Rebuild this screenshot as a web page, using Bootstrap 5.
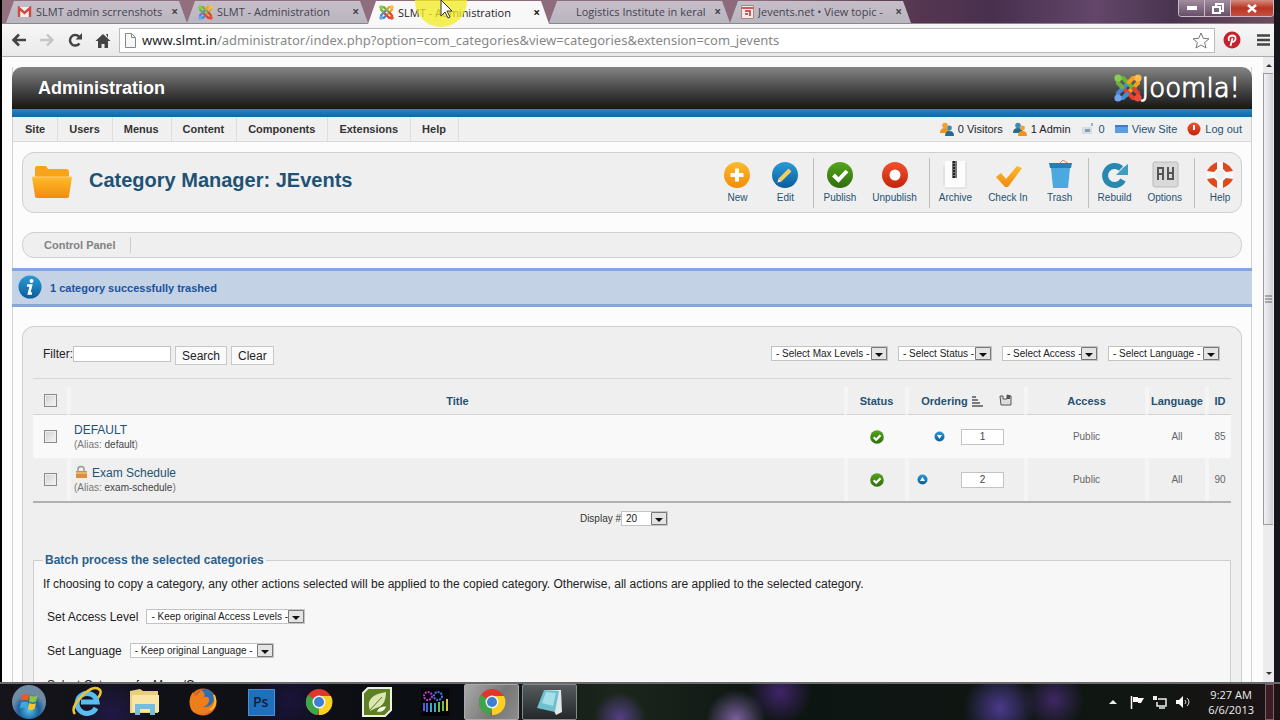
<!DOCTYPE html>
<html lang="en">
<head>
<meta charset="utf-8">
<meta name="viewport" content="width=device-width, initial-scale=1">
<title>SLMT - Administration</title>
<link href="https://cdn.jsdelivr.net/npm/bootstrap@5.3.0/dist/css/bootstrap.min.css" rel="stylesheet">
<style>
:root { --sys: "Open Sans", "Noto Sans", sans-serif; --ink: #1f5273; }
body { font: 11px/16px "Liberation Sans", Arial, sans-serif; color: #333; background: #000; }
a { color: var(--ink); text-decoration: none; }
svg { display: block; flex: none; }
.screen { height: 100vh; overflow: hidden; }
.window-body { margin-left: 2px; min-height: 0; border-right: 6px solid #17161c; }

/* browser chrome */
.tabstrip { height: 24px; font: 11px/20px var(--sys); color: #46424f; background: linear-gradient(90deg, #94707f 0, #8c6a7c 60%, #553650 72%, #49304f 78%, #63466a 86%, #493450 92%, #704b5b 100%); border-bottom: 1px solid #8b8692; }
.b-tab { flex: 0 0 181px; min-width: 0; height: 22px; margin-top: 1px; padding: 0 9px 0 11px; background: linear-gradient(#c5bec8, #b9b6c0); clip-path: polygon(8px 0, calc(100% - 8px) 0, 100% 100%, 0 100%); }
.b-tab.current { background: #f8f8f9; color: #222; height: 23px; }
.b-tab .close-x { font: bold 12px/18px var(--sys); }
.b-new { width: 28px; height: 12px; margin: 5px 0 0 4px; background: #bcb6c6; clip-path: polygon(0 0, 82% 0, 100% 100%, 16% 100%); }
.plain { border: 0; padding: 0; background: none; color: inherit; }
.pointer { left: 411px; top: 0; z-index: 3; pointer-events: none; }
.win-ctl { height: 17px; border: 1px solid #c9b9c9; border-top: 0; border-radius: 0 0 4px 4px; overflow: hidden; }
.win-ctl button { width: 26px; background: linear-gradient(#a28c9f, #665068); border-right: 1px solid #c9b9c9; display: grid; place-items: center; }
.win-ctl button:last-child { width: 42px; border: 0; background: linear-gradient(#d58c80, #b93423 50%, #c65040); }
.toolbar { height: 33px; background: linear-gradient(#f7f7f7, #e9e9e9); border-bottom: 1px solid #ababab; padding: 0 3px 0 9px; }
.omni { height: 25px; border: 1px solid #bbb; background: #fff; font: 13px/22px "Noto Sans", "Open Sans", sans-serif; }
.omni input { border: 0; outline: 0; width: 100%; color: #878787; }

/* page */
.page { background: #fcfcfc; padding: 10px 11px 0 10px; overflow: hidden; }
.frame { border: solid #d3d3d6; border-width: 0 1px; flex: 1; }
.head { height: 42px; padding: 0 12px 0 26px; border-radius: 10px 10px 0 0; background: linear-gradient(#858585, #4a4a4a 50%, #151515); margin: 0 -1px; }
.head h1 { font-size: 18px; line-height: 42px; font-weight: 700; color: #fff; margin: 0; }
.brand { font: 200 26px/40px "DejaVu Sans", sans-serif; color: #fff; -webkit-text-stroke: 1px #fff; }
.stripe { height: 8px; background: linear-gradient(#2489c2, #11679c); margin: 0 -1px; }
.menubar { height: 25px; background: #f0f0f1; border-bottom: 1px solid #d9d9da; }
.menubar .nav { padding-left: 1px; }
.menubar .nav-link { font-weight: 700; color: #333; padding: 4px 12px 4px 11px; border-right: 1px solid #ddd; line-height: 16px; height: 24px; }
.stats { gap: 4px; padding-right: 9px; }
.stats .gap-after { margin-right: 6px; }
.panel { background: #efefef; border: 1px solid #cfcfcf; border-radius: 12px; margin: 0 9px; }
.titlebox { margin-top: 10px; height: 61px; }
.titlebox h2 { font-size: 20px; line-height: 26px; font-weight: 700; color: var(--ink); margin: 0; padding-bottom: 5px; }
.tool { font-size: 10px; line-height: 14px; padding: 0 8px; color: var(--ink); text-align: center; }
.tool svg { margin: 0 auto 1px; }
.tool.final { padding-right: 5px; }
.rule { width: 1px; height: 50px; background: #bdbdbd; margin: 0 1px 0 4px; }
.submenu { margin-top: 19px; height: 26px; }
.submenu a { font-weight: 700; color: #828282; padding: 0 14px 0 21px; border-right: 1px solid #ccc; }
.notice { margin: 10px -1px 0; height: 39px; background: #c3d2e5; border: solid #84a7db; border-width: 3px 0; color: #1a52a0; font-weight: 700; padding-left: 6px; }
.main-box { margin-top: 19px; padding: 0 10px; border-radius: 12px 12px 0 0; border-bottom: 0; }
.filter { height: 52px; padding: 19px 11px 0 10px; border-bottom: 1px solid #d6d6d6; font-size: 12px; color: #222; }
.filter .picks { gap: 10px; }
.field { border: 1px solid #c3c3c3; background: #fff; border-radius: 0; outline: 0; height: 16px; padding: 0 4px; }
.filter .field { width: 98px; }
.push { font-size: 12px; line-height: 16px; border: 1px solid #c8c8c8; background: #fafafa; padding: 0 6px; height: 19px; border-radius: 0; color: #222; }
.pick { appearance: none; font-size: 10px; line-height: 13px; height: 15px; padding: 0 16px 0 4px; color: #222; border: 1px solid #c3c3c3; border-radius: 0; background: #fff url("data:image/svg+xml,%3Csvg xmlns='http://www.w3.org/2000/svg' width='16' height='13'%3E%3Cpath d='M.5.5h15v12H.5z' fill='%23e4e4e4' stroke='%23777'/%3E%3Cpath d='M4 6h8l-4 4z' fill='%23111'/%3E%3C/svg%3E") right center no-repeat; }
.w-levels { width: 117px; } .w-status { width: 94px; } .w-access { width: 96px; } .w-lang { width: 112px; }
.w-keep-a { width: 159px; } .w-keep-l { width: 144px; } .w-count { width: 47px; }
.tick { appearance: none; width: 13px; height: 13px; border: 1px solid #8a8a8a; background: linear-gradient(135deg, #cfcfcf, #f8f8f8); box-shadow: inset 0 0 0 1px #eee; display: block; margin: 0 auto; border-radius: 0; }
.listing-wrap { padding-top: 8px; border-bottom: 2px solid #b1b1b1; }
.listing { width: 100%; table-layout: fixed; border-collapse: separate; border-spacing: 0; }
.listing th { height: 28px; color: var(--ink); text-align: center; border-bottom: 1px solid #d3d3d3; padding: 0; }
.listing th + th, .listing td + td { border-left: 4px solid #f5f5f5; }
.listing td { height: 43px; text-align: center; color: #666; padding: 0; font-size: 10px; line-height: 14px; }
.listing tbody tr:first-child td { background: #f9f9f9; border-left-color: #f9f9f9; }
.listing td.name { text-align: left; padding-left: 3px; color: #777; }
.listing td.name a { font-size: 12px; line-height: 16px; }
.listing td.name span { color: #444; }
.listing .field { width: 43px; text-align: center; color: #444; }
.c-tick { width: 34px; } .c-status { width: 61px; } .c-order { width: 119px; } .c-access { width: 121px; } .c-lang { width: 60px; } .c-id { width: 26px; }
.paging { font-size: 10px; padding: 8px 16px 0 0; }
.batch { margin-top: 26px; border: 1px solid #cfcfcf; background: #f7f7f7; padding: 0 9px 20px; font-size: 12px; color: #222; height: 300px; }
.batch legend { float: none; width: auto; font-size: 12px; line-height: 14px; font-weight: 700; color: #2b5f8c; margin: 0; padding: 0 2px; }
.batch p { margin: 9px 0 17px; }
.batch .line { height: 16px; margin: 0 0 18px 4px; }
.scroller { width: 11px; background: #ececee; }
.scroller .thumb { border: 1px solid #9a9a9f; border-right: 0; background: linear-gradient(90deg, #f2f2f4, #cfcfd8); height: 452px; width: 10px; }

/* desktop bar */
.taskbar { height: 38px; border-top: 2px solid #6a6a6c; font: 11px/15px var(--sys); color: #eee;
 background: radial-gradient(circle at 620px 34px, #544084 0, transparent 26px), radial-gradient(circle at 736px 36px, #7a62a0 0, transparent 30px), radial-gradient(circle at 780px 8px, #3f2468 0, transparent 32px), radial-gradient(circle at 1000px 24px, #4a3a8c 0, transparent 36px), radial-gradient(circle at 1054px 16px, #3d2863 0, transparent 30px), radial-gradient(circle at 112px 30px, #211847 0, transparent 40px), radial-gradient(circle at 290px 16px, #1b133b 0, transparent 44px), linear-gradient(90deg, #14141a, #0a0d12 35%, #1c261c 48%, #0d1512 60%, #101612 90%, #1d1316); }
.task { flex: 0 0 58px; display: grid; place-items: center; height: 36px; }
.task.open { flex-basis: 55px; border: 1px solid #aaa; background: linear-gradient(120deg, #a9a9a9, #777 60%, #8c8c8c); border-radius: 2px; margin-right: 3px; }
.task.idle { background: linear-gradient(#565b5e, #23272a); border-color: #86898c; }
.tray { gap: 9px; }
.clock { margin: 0 11px 0 18px; }
.peek { width: 9px; height: 36px; border: 1px solid #7a6068; background: #3c1c25; margin-right: 6px; }
</style>
</head>
<body>
<svg width="0" height="0" class="position-absolute" aria-hidden="true">
<defs>
<linearGradient id="gOrange" x2="0" y2="1"><stop stop-color="#fdba2d"/><stop offset="1" stop-color="#f28c0b"/></linearGradient>
<linearGradient id="gBlue" x2="0" y2="1"><stop stop-color="#2b9bd8"/><stop offset="1" stop-color="#0a5c9b"/></linearGradient>
<linearGradient id="gGreen" x2="0" y2="1"><stop stop-color="#55a51c"/><stop offset="1" stop-color="#2f6d0c"/></linearGradient>
<linearGradient id="gRed" x2="0" y2="1"><stop stop-color="#f4502c"/><stop offset="1" stop-color="#c1240d"/></linearGradient>
<radialGradient id="gOrb" cx=".5" cy=".75"><stop stop-color="#4fc4ee"/><stop offset=".6" stop-color="#1c5f9c"/><stop offset="1" stop-color="#6f8ba4"/></radialGradient>
<symbol id="joomla" viewBox="0 0 28 28">
<g fill="none" stroke-width="4.2" stroke-linecap="round" stroke-linejoin="round">
<path d="M24 5v4L12 21" stroke="#f6a021"/><path d="M24 24h-5L7 12" stroke="#e5402c"/><path d="M4 24v-5L16 7" stroke="#4b87d4"/><path d="M4 4h5l12 12" stroke="#6bb43a"/>
<path d="M4 4v5l4 4" stroke="#6bb43a"/><path d="M24 4h-5l-4 4" stroke="#f6a021"/><path d="M24 24v-5l-4-4" stroke="#e5402c"/><path d="M4 24h5l4-4" stroke="#4b87d4"/></g>
<circle cx="4" cy="4" r="3.600" fill="#8ccb4f"/><circle cx="24" cy="4" r="3.600" fill="#fbbd44"/><circle cx="24" cy="24" r="3.600" fill="#ef4b38"/><circle cx="4" cy="24" r="3.600" fill="#6da4ea"/></symbol>
<symbol id="people" viewBox="0 0 14 14"><circle cx="5" cy="3.5" r="2.8" fill="#f3a12c"/><path d="M0 11q0-5 5-5t5 5z" fill="#ef9320"/><circle cx="9.5" cy="6" r="2.4" fill="#3b8cb0"/><path d="M5 14q0-5 4.500-5T14 14z" fill="#236c94"/></symbol>
<symbol id="people-alt" viewBox="0 0 14 14"><circle cx="5" cy="3.5" r="2.8" fill="#3b8cb0"/><path d="M0 11q0-5 5-5t5 5z" fill="#236c94"/><circle cx="9.5" cy="6" r="2.4" fill="#f3a12c"/><path d="M5 14q0-5 4.500-5T14 14z" fill="#ef9320"/></symbol>
<symbol id="okay" viewBox="0 0 14 14"><circle cx="7" cy="7" r="6.800" fill="url(#gGreen)"/><path d="M3.700 7.200l2.500 2.500 4.300-4.500" fill="none" stroke="#fff" stroke-width="2.200"/></symbol>
<symbol id="chrome" viewBox="0 0 28 28"><circle cx="14" cy="14" r="13" fill="#e2352b"/><path d="M14 14L3 7a13 13 0 0 0 9 20l6-11z" fill="#3fa54a"/><path d="M14 14v13A13 13 0 0 0 26 8H14z" fill="#fbd021"/><circle cx="14" cy="14" r="6.500" fill="#f4f4f4"/><circle cx="14" cy="14" r="5" fill="#3f7ed0"/></symbol>
</defs></svg>

<div class="screen d-flex flex-column">
 <div class="window-body flex-grow-1 d-flex flex-column">
  <div class="tabstrip d-flex flex-shrink-0 position-relative" role="tablist">
   <div class="b-tab d-flex align-items-center ms-1" role="tab"><svg width="15" height="12" viewBox="0 0 15 12" class="me-1"><path fill="#eee" d="M1 1h13v10H1z"/><path d="M2 11V2l5.500 5L13 2v9" fill="none" stroke="#d14a42" stroke-width="2.400"/></svg><span class="flex-grow-1 text-nowrap overflow-hidden">SLMT admin scrrenshots</span><button class="plain close-x ms-1" aria-label="Close tab">×</button></div>
   <div class="b-tab d-flex align-items-center" role="tab"><svg width="15" height="15" class="me-1"><use href="#joomla"/></svg><span class="flex-grow-1">SLMT - Administration</span><button class="plain close-x" aria-label="Close tab">×</button></div>
   <div class="b-tab current d-flex align-items-center" role="tab" aria-selected="true"><svg width="15" height="15" class="me-1"><use href="#joomla"/></svg><span class="flex-grow-1">SLMT - Administration</span><button class="plain close-x" aria-label="Close tab">×</button></div>
   <div class="b-tab d-flex align-items-center" role="tab"><span class="flex-grow-1 ps-3 text-nowrap overflow-hidden">Logistics Institute in keral</span><button class="plain close-x ms-1" aria-label="Close tab">×</button></div>
   <div class="b-tab d-flex align-items-center" role="tab"><svg width="13" height="14" viewBox="0 0 13 14" class="me-1"><path fill="#f3e9e9" stroke="#b98080" d="M.5.500h12v13H.5z"/><path d="M1 3h11M4 6h5v5M4 9h3" stroke="#c62c2c" stroke-width="1.500" fill="none"/></svg><span class="flex-grow-1 text-nowrap overflow-hidden">Jevents.net • View topic -</span><button class="plain close-x ms-1" aria-label="Close tab">×</button></div>
   <button class="plain b-new" aria-label="New tab"></button>
   <div class="win-ctl d-flex ms-auto">
    <button class="plain" aria-label="Minimize"><svg width="10" height="4"><path fill="#fff" d="M0 0h10v4H0z"/></svg></button>
    <button class="plain" aria-label="Restore"><svg width="12" height="11"><path d="M4 3V1h7v7H9M1 4h7v6H1z" fill="none" stroke="#fff" stroke-width="2"/></svg></button>
    <button class="plain" aria-label="Close"><svg width="10" height="9"><path d="M1 1l8 7M9 1L1 8" stroke="#fff" stroke-width="2.500"/></svg></button>
   </div>
   <svg class="pointer position-absolute" width="56" height="28"><circle cx="28" cy="1" r="26" fill="#f4ec1f" opacity=".75"/><path d="M28 0v16l4-4 3 6 2-1-3-6h5z" fill="#fff" stroke="#333"/></svg>
  </div>
  <div class="toolbar d-flex flex-shrink-0 align-items-center">
   <button class="plain" aria-label="Back"><svg width="16" height="14"><path d="M15 7H3M8 1.500L2.500 7 8 12.500" fill="none" stroke="#444" stroke-width="2.600"/></svg></button>
   <button class="plain ms-2 ps-1" aria-label="Forward"><svg width="16" height="14"><path d="M1 7h12M8 1.500L13.500 7 8 12.500" fill="none" stroke="#c5c5c5" stroke-width="2.400"/></svg></button>
   <button class="plain ms-2 ps-1" aria-label="Reload"><svg width="16" height="16" viewBox="0 0 16 16"><path d="M12.500 11.500A5.300 5.300 0 1 1 12 4.500" fill="none" stroke="#444" stroke-width="2.500"/><path d="M8.500 7.500H15V1z" fill="#444"/></svg></button>
   <button class="plain ms-2 ps-1" aria-label="Home"><svg width="16" height="15"><path d="M8 1l7.500 7H13v7H9.500v-4h-3v4H3V8H.5zM11 1h2v4z" fill="#444"/></svg></button>
   <form class="omni d-flex align-items-center flex-grow-1 ms-2 pe-1">
    <svg width="14" height="15" class="ms-1 me-1"><path d="M1.500.500h6l4 4v10h-10zM7.500.500v4h4" fill="#f7f7f7" stroke="#888"/></svg>
    <label class="text-dark mb-0" for="url">www.slmt.in</label><input id="url" class="p-0" value="/administrator/index.php?option=com_categories&amp;view=categories&amp;extension=com_jevents">
    <svg width="18" height="17" viewBox="0 0 18 17"><path d="M9 1l2.300 5.400 5.700.400-4.400 3.700 1.400 5.500-5-3-5 3 1.400-5.500L1 6.800l5.700-.4z" fill="#fff" stroke="#777"/></svg>
   </form>
   <button class="plain ms-2" aria-label="Pin it"><svg width="18" height="18"><circle cx="9" cy="9" r="8.500" fill="#c8202a"/><path d="M6 10Q4.500 5 9 4.500 13 4.500 12.500 8 11.500 11.500 9 10.500M9.500 7L7.500 15" fill="none" stroke="#fff" stroke-width="1.800"/></svg></button>
   <button class="plain ms-3" aria-label="Menu"><svg width="14" height="14"><path d="M0 2.500h13M0 7h13M0 11.500h13" stroke="#444" stroke-width="2.600"/></svg></button>
  </div>

  <div class="d-flex flex-grow-1 overflow-hidden">
   <div class="page d-flex flex-column flex-grow-1">
    <div class="frame">
     <header class="head d-flex align-items-center justify-content-between"><h1>Administration</h1>
      <div class="brand d-flex align-items-center"><svg width="28" height="28"><use href="#joomla"/></svg>Joomla!</div></header>
     <div class="stripe"></div>
     <nav class="menubar d-flex align-items-center">
      <div class="nav flex-nowrap flex-grow-1"><a class="nav-link" href="#">Site</a><a class="nav-link" href="#">Users</a><a class="nav-link" href="#">Menus</a><a class="nav-link" href="#">Content</a><a class="nav-link" href="#">Components</a><a class="nav-link" href="#">Extensions</a><a class="nav-link" href="#">Help</a></div>
      <div class="stats d-flex align-items-center">
       <svg width="14" height="14"><use href="#people"/></svg><span class="gap-after text-dark">0 Visitors</span>
       <svg width="14" height="14"><use href="#people-alt"/></svg><span class="gap-after text-dark">1 Admin</span>
       <svg width="14" height="14"><path d="M1 5h10v7H1z" fill="#d3dce8"/><path d="M4 7h5v3H4z" fill="#8c9dae"/><path d="M10 1h2v3h-2z" fill="#9db0c9"/></svg><a href="#" class="gap-after">0</a>
       <svg width="13" height="10"><path d="M0 1h13v8H0z" fill="#5a9fe4"/><path d="M0 1h13v2H0z" fill="#3d7fc6"/></svg><a href="#" class="gap-after">View Site</a>
       <svg width="14" height="14"><circle cx="7" cy="7" r="6.500" fill="url(#gRed)"/><path d="M7 3v5" stroke="#fff" stroke-width="2"/></svg><a href="#">Log out</a>
      </div>
     </nav>

     <section class="panel titlebox d-flex align-items-center">
      <svg width="42" height="36" viewBox="0 0 42 36" class="ms-2 me-2 flex-shrink-0"><path d="M4 3q0-2 2-2h9l2 3h18q3 0 3 3v8H4z" fill="#f7a31c"/><path d="M1 12h40l-3 19q0 2-3 2H7q-3 0-3-2z" fill="url(#gOrange)"/><path d="M1 12h40" stroke="#ffd27a"/></svg>
      <h2 class="flex-grow-1 ps-1 ms-1">Category Manager: JEvents</h2>
      <div class="d-flex align-items-center">
       <a class="tool" href="#"><svg width="32" height="30" viewBox="0 0 32 30"><circle cx="16" cy="15" r="13" fill="url(#gOrange)"/><path d="M16 8.500v13M9.500 15h13" stroke="#fff" stroke-width="4"/></svg>New</a>
       <a class="tool" href="#"><svg width="32" height="30" viewBox="0 0 32 30"><circle cx="16" cy="15" r="13" fill="url(#gBlue)"/><path d="M11 20l10-10" stroke="#f1ce62" stroke-width="4"/><path d="M8.500 22.500l1-4 3 3z" fill="#f6e8c4"/></svg>Edit</a>
       <span class="rule"></span>
       <a class="tool" href="#"><svg width="32" height="30" viewBox="0 0 32 30"><circle cx="16" cy="15" r="13" fill="url(#gGreen)"/><path d="M9.500 15l5 5 8.500-9" fill="none" stroke="#fff" stroke-width="4"/></svg>Publish</a>
       <a class="tool" href="#"><svg width="32" height="30" viewBox="0 0 32 30"><circle cx="16" cy="15" r="13" fill="url(#gRed)"/><circle cx="16" cy="15" r="5.500" fill="#fff"/></svg>Unpublish</a>
       <span class="rule"></span>
       <a class="tool" href="#"><svg width="32" height="30" viewBox="0 0 32 30"><path d="M4 6h5v20H4z" fill="#e2e2e2"/><path d="M6 1h21v27H6z" fill="#fcfcfc"/><path d="M6 28h21V2" fill="none" stroke="#d5d5d5"/><path d="M13 1h5v17h-5z" fill="#777"/><path d="M15 1v17" stroke="#222" stroke-width="2" stroke-dasharray="2 1"/></svg>Archive</a>
       <a class="tool" href="#"><svg width="32" height="30" viewBox="0 0 32 30"><path d="M4 17l5-4 5 6L25 6l5 2-14 19h-3z" fill="url(#gOrange)"/></svg>Check In</a>
       <a class="tool" href="#"><svg width="32" height="30" viewBox="0 0 32 30"><path d="M15 4l4-4 6 4z" fill="#eee" stroke="#c88"/><path d="M5 3h23l-1 5H6z" fill="#2580ba"/><path d="M7 8h19l-2 20H9z" fill="#4ba9df"/></svg>Trash</a>
       <span class="rule"></span>
       <a class="tool" href="#"><svg width="32" height="30" viewBox="0 0 32 30"><path d="M24 20a9.500 9.500 0 1 1-2-11.500" fill="none" stroke="#2888b0" stroke-width="6"/><path d="M17 15h12V4l-4 3z" fill="#3f9dc0"/></svg>Rebuild</a>
       <a class="tool" href="#"><svg width="32" height="30" viewBox="0 0 32 30"><rect x="4" y="2" width="25" height="25" rx="2" fill="#d9d9d9" stroke="#bbb"/><path d="M9 20V8h5v12M9 14h5M19 7v12h5V7M19 13h5" fill="none" stroke="#555" stroke-width="2"/></svg>Options</a>
       <span class="rule"></span>
       <a class="tool final" href="#"><svg width="32" height="30" viewBox="0 0 32 30"><circle cx="16" cy="15" r="9" fill="none" stroke="#fafafa" stroke-width="8"/><g fill="#de4a1c"><path d="M3 11q3-6 10-9v7l-3 3z"/><path d="M29 11q-3-6-10-9v7l3 3z"/><path d="M3 19q3 6 10 9v-7l-3-3z"/><path d="M29 19q-3 6-10 9v-7l3-3z"/></g></svg>Help</a>
      </div>
     </section>
     <nav class="panel submenu d-flex align-items-center"><a href="#">Control Panel</a></nav>
     <div class="notice d-flex align-items-center" role="status"><svg width="24" height="26" viewBox="0 0 24 26" class="me-2"><circle cx="12" cy="12" r="11.500" fill="url(#gBlue)"/><circle cx="13.500" cy="6" r="2" fill="#fff"/><path d="M9 10.500h4l-2 8h3" fill="none" stroke="#fff" stroke-width="2.600"/></svg>1 category successfully trashed</div>

     <section class="panel main-box">
      <form class="filter d-flex align-items-start">
       <label for="q">Filter:</label><input id="q" class="field"><button type="button" class="push ms-1">Search</button><button type="button" class="push ms-1">Clear</button>
       <div class="picks d-flex ms-auto">
        <select class="pick w-levels" aria-label="Max levels"><option>- Select Max Levels -</option></select>
        <select class="pick w-status" aria-label="Status"><option>- Select Status -</option></select>
        <select class="pick w-access" aria-label="Access"><option>- Select Access -</option></select>
        <select class="pick w-lang" aria-label="Language"><option>- Select Language -</option></select>
       </div>
      </form>
      <div class="listing-wrap">
      <table class="listing">
       <colgroup><col class="c-tick"><col><col class="c-status"><col class="c-order"><col class="c-access"><col class="c-lang"><col class="c-id"></colgroup>
       <thead><tr><th><input type="checkbox" class="tick" aria-label="Select all"></th><th>Title</th><th>Status</th>
        <th><div class="d-flex align-items-center justify-content-center">Ordering<svg width="11" height="12" class="me-3 ms-1"><path d="M0 2h4M0 5h6M0 8h8M0 11h11" stroke="#555" stroke-width="1.500"/></svg><button class="plain" aria-label="Save order"><svg width="13" height="13"><path d="M1 2h3v3h4V1l4 1v9H2z" fill="#ddd" stroke="#555"/><path d="M8 1h3v4H8z" fill="#555"/></svg></button></div></th>
        <th>Access</th><th>Language</th><th>ID</th></tr></thead>
       <tbody>
        <tr><td><input type="checkbox" class="tick" aria-label="Select DEFAULT"></td><td class="name"><a href="#">DEFAULT</a><div>(Alias: <span>default</span>)</div></td><td><svg width="14" height="14" class="mx-auto"><use href="#okay"/></svg></td>
         <td><div class="d-flex align-items-center justify-content-end pe-3 gap-3"><svg width="11" height="11"><circle cx="5.500" cy="5.500" r="5" fill="url(#gBlue)"/><path d="M3 4h5L5.500 8z" fill="#fff"/></svg><input class="field me-1" value="1" aria-label="Order of DEFAULT"></div></td><td>Public</td><td>All</td><td>85</td></tr>
        <tr><td><input type="checkbox" class="tick" aria-label="Select Exam Schedule"></td><td class="name"><div class="d-flex"><svg width="14" height="15" class="me-1"><path d="M4 7V4q0-2.500 3-2.500T10 4v3" fill="none" stroke="#999" stroke-width="1.500"/><path d="M2 6h11v7H2z" fill="#d8903c"/><path d="M2 8h11" stroke="#f4d6a0"/></svg><a href="#">Exam Schedule</a></div><div>(Alias: <span>exam-schedule</span>)</div></td><td><svg width="14" height="14" class="mx-auto"><use href="#okay"/></svg></td>
         <td><div class="d-flex align-items-center justify-content-between ps-2 pe-3"><svg width="11" height="11"><circle cx="5.500" cy="5.500" r="5" fill="url(#gBlue)"/><path d="M3 7h5L5.500 3z" fill="#fff"/></svg><input class="field me-1" value="2" aria-label="Order of Exam Schedule"></div></td><td>Public</td><td>All</td><td>90</td></tr>
       </tbody>
      </table>
      </div>
      <div class="paging d-flex justify-content-center"><label for="n">Display #</label><select id="n" class="pick w-count"><option>20</option></select></div>
      <fieldset class="batch">
       <legend>Batch process the selected categories</legend>
       <p>If choosing to copy a category, any other actions selected will be applied to the copied category. Otherwise, all actions are applied to the selected category.</p>
       <div class="line d-flex"><label for="al" class="me-2">Set Access Level</label><select id="al" class="pick w-keep-a"><option>- Keep original Access Levels -</option></select></div>
       <div class="line d-flex"><label for="sl" class="me-2">Set Language</label><select id="sl" class="pick w-keep-l"><option>- Keep original Language -</option></select></div>
       <div class="line">Select Category for Move/Copy</div>
      </fieldset>
     </section>
    </div>
   </div>
   <div class="scroller d-flex flex-column flex-shrink-0">
    <svg width="11" height="16"><path d="M3 10h6L6 7z" fill="#333"/></svg>
    <div class="thumb d-grid align-content-center justify-content-center"><svg width="7" height="8"><path d="M0 1h7M0 4h7M0 7h7" stroke="#666"/></svg></div>
    <svg width="11" height="14" class="mt-auto"><path d="M3 4h6L6 7z" fill="#333"/></svg>
   </div>
  </div>
 </div>

 <footer class="taskbar d-flex align-items-center flex-shrink-0">
  <button class="plain task" aria-label="Start"><svg width="36" height="36" viewBox="0 0 36 36"><circle cx="18" cy="18" r="17" fill="url(#gOrb)"/><path d="M11 11q3-2 7 0l-1 6q-4-2-7 0z" fill="#ee5a24"/><path d="M19 11.500q4 2 7.500 0l-1.500 6q-3 2-7 0z" fill="#8cc63f"/><path d="M10 18.500q3-2 7 0l-1 6q-4-2-7.500 0z" fill="#3fa9e8"/><path d="M18 19q4 2 7 0l-1.500 6q-3 2-6.500 0z" fill="#fcc62b"/></svg></button>
  <button class="plain task" aria-label="Internet Explorer"><svg width="30" height="32" viewBox="0 0 30 32"><path d="M24 22a10 10 0 1 1 1-6H9" fill="none" stroke="#58bdf0" stroke-width="5"/><path d="M3 28Q-2 22 10 10T28 4q2 3-2 8" fill="none" stroke="#f1c232" stroke-width="2.500"/></svg></button>
  <button class="plain task" aria-label="Explorer"><svg width="32" height="30" viewBox="0 0 32 30"><path d="M1 4l10-2 3 2h15v22H1z" fill="#e9cf7c"/><path d="M3 8h27v17H3z" fill="#f7e6a6"/><path d="M6 17h20v11h-5v-6H11v6H6z" fill="#74bce0"/></svg></button>
  <button class="plain task" aria-label="Firefox"><svg width="30" height="30" viewBox="0 0 30 30"><circle cx="15" cy="15" r="13.500" fill="#e66a17"/><circle cx="17" cy="11" r="9" fill="#2c6fb8"/><path d="M13 3q5 3 3 7 6-1 5 4t-7 6q8 2 12-6-1 12-12 13T2 18Q1 10 5 5l2 5z" fill="#ee7d1c"/><path d="M26 8q4 10-4 15" fill="none" stroke="#fbc02d" stroke-width="2"/></svg></button>
  <button class="plain task" aria-label="Photoshop"><svg width="27" height="27"><path d="M0 0h27v27H0z" fill="#1f6fbc"/><path d="M.5.500h26v26H.5z" fill="none" stroke="#3d95dd"/><text x="5" y="18" font-family="Open Sans, sans-serif" font-weight="600" font-size="14" fill="#0c1f3a">Ps</text></svg></button>
  <button class="plain task" aria-label="Chrome"><svg width="28" height="28"><use href="#chrome"/></svg></button>
  <button class="plain task" aria-label="Leaf"><svg width="30" height="30" viewBox="0 0 30 30"><path d="M6 1h23v22l-6 6H1V6z" fill="#5e8024" stroke="#eef2e2" stroke-width="2"/><path d="M7 20Q5 8 24 5q0 14-10 16l-6 3z" fill="#dbe6b0"/><path d="M7 24L20 10M14 25q8 2 11-6-8-1-11 6z" stroke="#56771f" fill="#f3f6e6"/></svg></button>
  <button class="plain task" aria-label="Recorder"><svg width="28" height="28" viewBox="0 0 28 28"><path d="M0 0h28v28H0z" fill="#030308"/><circle cx="7" cy="8" r="4" fill="none" stroke="#b43dd0" stroke-width="2" stroke-dasharray="2 1"/><circle cx="17" cy="8" r="4" fill="none" stroke="#3a7ee8" stroke-width="2" stroke-dasharray="2 1"/><path d="M3 15v8M6 15v9" stroke="#4b62e0" stroke-width="2"/><path d="M10 15v9M14 15v9" stroke="#2fb2c9" stroke-width="2"/><path d="M18 14v10M22 13v10" stroke="#6cc04a" stroke-width="2"/><path d="M26 11v12" stroke="#d8c93b" stroke-width="2"/></svg></button>
  <button class="plain task open" aria-label="Chrome window"><svg width="28" height="28"><use href="#chrome"/></svg></button>
  <button class="plain task open idle" aria-label="Notepad window"><svg width="30" height="28" viewBox="0 0 30 28"><path d="M9 2h17l1 22-6 3z" fill="#dfe9ea"/><path d="M9 2l15 1-4 21L2 20z" fill="#6fc0cf"/><path d="M11 4l10 1-3 13-11-3z" fill="#a6e0e6"/></svg></button>
  <div class="tray d-flex align-items-center ms-auto">
   <svg width="8" height="6" class="me-1"><path d="M0 5h8L4 1z" fill="#eee"/></svg>
   <svg width="14" height="14"><path d="M1.500 1v13" stroke="#fff" stroke-width="1.500"/><path d="M3 2h5v1h6l-3 5H8V7H3z" fill="#fff"/></svg>
   <svg width="14" height="14"><path d="M5 4h8v7H4V7M6 13h6" fill="none" stroke="#eee" stroke-width="1.500"/><path d="M0 1h4v4H0z" fill="#eee"/></svg>
   <svg width="14" height="14"><path d="M0 5h3l4-4v12L3 9H0z" fill="#fff"/><path d="M9 5q2 2 0 4M11 3q4 4 0 8" fill="none" stroke="#ddd"/></svg>
  </div>
  <div class="clock text-center"><div>9:27 AM</div><div>6/6/2013</div></div>
  <button class="plain peek" aria-label="Show desktop"></button>
 </footer>
</div>
<script src="https://cdn.jsdelivr.net/npm/bootstrap@5.3.0/dist/js/bootstrap.bundle.min.js"></script>
</body>
</html>
